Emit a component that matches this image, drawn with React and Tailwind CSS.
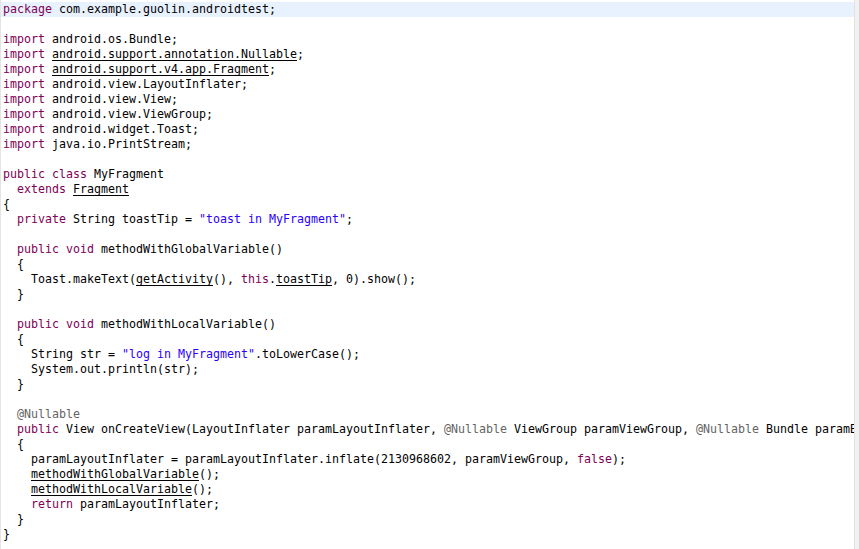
import React from "react";

const K = ({ children }) => <span className="text-[#7f0055]">{children}</span>;
const S = ({ children }) => <span className="text-[#2a00ff]">{children}</span>;
const A = ({ children }) => <span className="text-[#646464]">{children}</span>;
const U = ({ children }) => (
    <span className="underline decoration-1 underline-offset-2">{children}</span>
);

const lines = [
    <><K>package</K> com.example.guolin.androidtest;</>,
    null,
    <><K>import</K> android.os.Bundle;</>,
    <><K>import</K> <U>android.support.annotation.Nullable</U>;</>,
    <><K>import</K> <U>android.support.v4.app.Fragment</U>;</>,
    <><K>import</K> android.view.LayoutInflater;</>,
    <><K>import</K> android.view.View;</>,
    <><K>import</K> android.view.ViewGroup;</>,
    <><K>import</K> android.widget.Toast;</>,
    <><K>import</K> java.io.PrintStream;</>,
    null,
    <><K>public</K> <K>class</K> MyFragment</>,
    <>  <K>extends</K> <U>Fragment</U></>,
    <>{"{"}</>,
    <>  <K>private</K> String toastTip = <S>"toast in MyFragment"</S>;</>,
    null,
    <>  <K>public</K> <K>void</K> methodWithGlobalVariable()</>,
    <>  {"{"}</>,
    <>    Toast.makeText(<U>getActivity</U>(), <K>this</K>.<U>toastTip</U>, 0).show();</>,
    <>  {"}"}</>,
    null,
    <>  <K>public</K> <K>void</K> methodWithLocalVariable()</>,
    <>  {"{"}</>,
    <>    String str = <S>"log in MyFragment"</S>.toLowerCase();</>,
    <>    System.out.println(str);</>,
    <>  {"}"}</>,
    null,
    <>  <A>@Nullable</A></>,
    <>  <K>public</K> View onCreateView(LayoutInflater paramLayoutInflater, <A>@Nullable</A> ViewGroup paramViewGroup, <A>@Nullable</A> Bundle paramB</>,
    <>  {"{"}</>,
    <>    paramLayoutInflater = paramLayoutInflater.inflate(2130968602, paramViewGroup, <K>false</K>);</>,
    <>    <U>methodWithGlobalVariable</U>();</>,
    <>    <U>methodWithLocalVariable</U>();</>,
    <>    <K>return</K> paramLayoutInflater;</>,
    <>  {"}"}</>,
    <>{"}"}</>,
];

export default function App() {
    return (
        <div className="flex h-[549px] w-[859px] overflow-hidden bg-white">
            {/* left editor edge */}
            <div className="w-px bg-[#e4e4e4]"></div>

            {/* code area */}
            <div
                className="flex-1 overflow-hidden pt-[2px] text-[11.63px] text-black"
                style={{ fontFamily: '"DejaVu Sans Mono", "Liberation Mono", monospace' }}
            >
                {lines.map((line, i) => (
                    <div
                        key={i}
                        className={`h-[15px] whitespace-pre pl-[2px] leading-[15px] ${i === 0 ? "bg-[#e8f2fe]" : ""}`}
                    >
                        {line}
                    </div>
                ))}
            </div>

            {/* scrollbar strip */}
            <div className="w-[5px] border-l border-[#e2e2e2] bg-[#f1f1f1]"></div>
        </div>
    );
}
